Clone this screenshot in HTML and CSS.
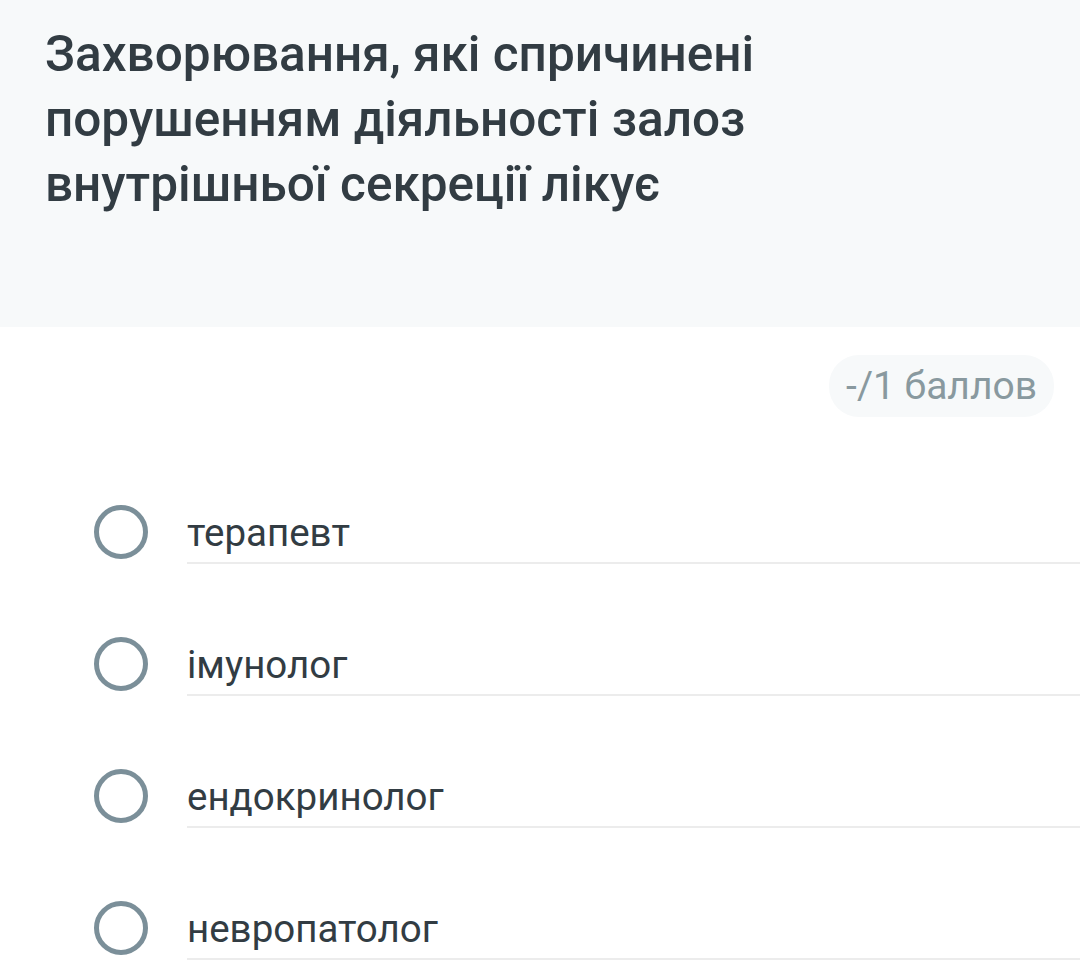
FILE: index.html
```html
<!DOCTYPE html>
<html lang="uk">
<head>
<meta charset="utf-8">
<link rel="stylesheet" href="styles.css">
</head>
<body>
<div class="page">
  <header class="question">
    <h1 class="title">Захворювання, які спричинені порушенням діяльності залоз внутрішньої секреції лікує</h1>
  </header>
  <div class="score-row">
    <span class="score">-/1 баллов</span>
  </div>
  <ul class="options">
    <li class="option"><span class="radio"></span><span class="label">терапевт</span></li>
    <li class="option"><span class="radio"></span><span class="label">імунолог</span></li>
    <li class="option"><span class="radio"></span><span class="label">ендокринолог</span></li>
    <li class="option"><span class="radio"></span><span class="label">невропатолог</span></li>
  </ul>
</div>
</body>
</html>
```

FILE: styles.css
```css
* { box-sizing: border-box; }
html, body { margin: 0; padding: 0; background: #fff; }
body { font-family: Roboto, "Noto Sans", sans-serif; width: 1080px; height: 978px; overflow: hidden; }
.question {
  background: #f7f9fa;
  height: 327px;
  padding: 22px 60px 0 45px;
}
.title {
  margin: 0;
  font-size: 49.5px;
  font-weight: 500;
  line-height: 65px;
  color: #323c43;
  max-width: 800px;
}
.score-row {
  display: flex;
  justify-content: flex-end;
  padding: 28px 26px 0 0;
}
.score {
  background: #f7f9fa;
  border-radius: 30px;
  height: 62px;
  padding: 0 17px;
  display: flex;
  align-items: center;
  font-size: 39px;
  color: #89999f;
}
.options { list-style: none; margin: 0; padding: 82px 0 0 94px; }
.option {
  display: flex;
  align-items: center;
  height: 66px;
  margin: 0 0 66px 0;
}
.options .option:last-child { margin-bottom: 0; }
.radio {
  width: 54px; height: 54px;
  border: 5px solid #7b8f99;
  border-radius: 50%;
  flex: none;
}
.label {
  margin-left: 39px;
  flex: 1;
  font-size: 38.5px;
  color: #323c43;
  height: 64px;
  display: flex;
  align-items: center;
  border-bottom: 2px solid #ececec;
  padding-top: 2px;
}
```
